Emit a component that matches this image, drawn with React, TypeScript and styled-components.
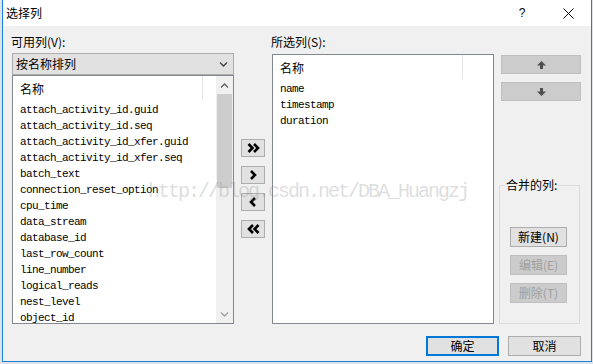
import React from 'react';
import styled, { createGlobalStyle } from 'styled-components';

const UI_FONT = `"Noto Sans CJK SC", "Liberation Sans", sans-serif`;
const LIST_FONT = `"Liberation Mono", "Noto Sans CJK SC", monospace`;

const GlobalStyle = createGlobalStyle`
  html, body {
    margin: 0;
    padding: 0;
    background: #dfe3e8;
  }
  body {
    font-family: ${UI_FONT};
    font-size: 12px;
    color: #000;
  }
`;

const Dialog = styled.div`
  position: relative;
  box-sizing: border-box;
  width: 590px;
  height: 362px;
  margin-left: 2px;
  border: 1px solid #1883d7;
  border-top: 0;
  background: #f0f0f0;
  display: flex;
  flex-direction: column;
  overflow: hidden;
`;

const TitleBar = styled.div`
  height: 26px;
  flex: none;
  background: #fff;
  display: flex;
  align-items: center;
  padding-left: 3px;
  font-size: 12px;
  line-height: 16px;
`;

const Title = styled.span`
  flex: 1;
`;

const TitleControl = styled.span`
  width: 46px;
  display: flex;
  justify-content: center;
  align-items: center;
  font-family: "Liberation Sans", sans-serif;
  font-size: 12px;
`;

const Body = styled.div`
  flex: 1;
  display: flex;
  flex-direction: column;
  padding: 8px 10px 5px 9px;
`;

const Main = styled.div`
  display: flex;
  gap: 7px;
  height: 290px;
`;

const Column = styled.div<{ $width: number }>`
  width: ${(p) => p.$width}px;
  display: flex;
  flex-direction: column;
`;

const Label = styled.div<{ $height: number }>`
  height: ${(p) => p.$height}px;
  line-height: 16px;
  font-size: 12px;
  margin-left: -1px;
`;

const Dropdown = styled.div`
  box-sizing: border-box;
  height: 22px;
  border: 1px solid #adadad;
  background: #e1e1e1;
  display: flex;
  align-items: center;
  justify-content: space-between;
  padding: 0 5px 0 3px;
  line-height: 16px;
`;

const ListBox = styled.div<{ $height: number }>`
  box-sizing: border-box;
  height: ${(p) => p.$height}px;
  border: 1px solid #828790;
  background: #fff;
  display: flex;
  overflow: hidden;
`;

const ListContent = styled.div`
  flex: 1;
  min-width: 0;
  overflow: hidden;
`;

const Header = styled.div`
  height: 24px;
  display: flex;
`;

const HeaderCell = styled.div`
  width: 190px;
  box-sizing: border-box;
  border-right: 1px solid #e5e5e5;
  padding: 2px 0 0 7px;
  line-height: 22px;
  font-size: 12px;
`;

const Items = styled.div`
  padding-top: 2px;
`;

const Item = styled.div`
  height: 16px;
  line-height: 16px;
  padding-left: 7px;
  font-family: ${LIST_FONT};
  font-size: 11px;
  letter-spacing: -0.6px;
  white-space: nowrap;
`;

const ScrollBar = styled.div`
  width: 17px;
  flex: none;
  background: #f0f0f0;
  display: flex;
  flex-direction: column;
`;

const ScrollArrow = styled.div`
  height: 18px;
  display: flex;
  align-items: center;
  justify-content: center;
`;

const ScrollTrack = styled.div`
  flex: 1;
  display: flex;
  flex-direction: column;
  padding: 0 1px;
`;

const Thumb = styled.div`
  height: 94px;
  background: #cdcdcd;
`;

const MoveColumn = styled.div`
  width: 24px;
  padding-top: 105px;
  display: flex;
  flex-direction: column;
  gap: 9px;
`;

const SmallButton = styled.div`
  box-sizing: border-box;
  width: 24px;
  height: 18px;
  border: 1px solid #adadad;
  background: #e1e1e1;
  display: flex;
  align-items: center;
  justify-content: center;
`;

const SideColumn = styled.div`
  width: 80px;
  padding-top: 21px;
  display: flex;
  flex-direction: column;
`;

const OrderButton = styled.div`
  box-sizing: border-box;
  height: 19px;
  border: 1px solid #bfbfbf;
  background: #cccccc;
  display: flex;
  align-items: center;
  justify-content: center;
  & + & {
    margin-top: 8px;
  }
`;

const Group = styled.fieldset`
  box-sizing: border-box;
  margin: 76px 0 0 -2px;
  width: 81px;
  flex: 1;
  border: 1px solid #dcdcdc;
  padding: 34px 0 0 10px;
  display: flex;
  flex-direction: column;
  gap: 8px;
`;

const GroupTitle = styled.legend`
  margin-left: -5px;
  padding: 0 1px;
  line-height: 16px;
  font-size: 12px;
`;

const GroupButton = styled.div<{ $disabled?: boolean }>`
  box-sizing: border-box;
  width: 57px;
  height: 20px;
  border: 1px solid ${(p) => (p.$disabled ? '#bfbfbf' : '#adadad')};
  background: ${(p) => (p.$disabled ? '#cccccc' : '#e1e1e1')};
  color: ${(p) => (p.$disabled ? '#a0a0a0' : '#000')};
  display: flex;
  align-items: center;
  justify-content: center;
  font-size: 12px;
  line-height: 16px;
`;

const Footer = styled.div`
  margin-top: 12px;
  display: flex;
  justify-content: flex-end;
  gap: 9px;
`;

const DialogButton = styled.div<{ $primary?: boolean }>`
  box-sizing: border-box;
  width: 73px;
  height: 20px;
  border: ${(p) => (p.$primary ? '2px solid #0078d7' : '1px solid #adadad')};
  background: #e1e1e1;
  display: flex;
  align-items: center;
  justify-content: center;
  font-size: 12px;
  line-height: 16px;
`;

const Watermark = styled.div`
  position: absolute;
  left: 145px;
  top: 182px;
  font-family: "Liberation Mono", monospace;
  font-size: 20px;
  line-height: 20px;
  letter-spacing: -2px;
  color: rgba(140, 140, 140, 0.3);
  white-space: nowrap;
  pointer-events: none;
`;

const available = [
  'attach_activity_id.guid',
  'attach_activity_id.seq',
  'attach_activity_id_xfer.guid',
  'attach_activity_id_xfer.seq',
  'batch_text',
  'connection_reset_option',
  'cpu_time',
  'data_stream',
  'database_id',
  'last_row_count',
  'line_number',
  'logical_reads',
  'nest_level',
  'object_id',
];

const selected = ['name', 'timestamp', 'duration'];

const Chevron = ({ dir, double }: { dir: 'left' | 'right'; double?: boolean }) => (
  <svg
    width={double ? 13 : 8}
    height={10}
    viewBox={double ? '0 0 13 10' : '0 0 8 10'}
    style={{ transform: dir === 'left' ? 'scaleX(-1)' : undefined }}
  >
    <path
      d={double ? 'M1.5 1 L5.5 5 L1.5 9 M7 1 L11 5 L7 9' : 'M2 1 L6 5 L2 9'}
      fill="none"
      stroke="#000"
      strokeWidth={2.6}
    />
  </svg>
);

const BlockArrow = ({ down }: { down?: boolean }) => (
  <svg width={9} height={8} viewBox="0 0 9 8" style={{ transform: down ? 'scaleY(-1)' : undefined }}>
    <path d="M4.5 0 L9 4.5 H6 V8 H3 V4.5 H0 Z" fill="#4f4f4f" />
  </svg>
);

const SmallCaret = ({ down, color = '#606060' }: { down?: boolean; color?: string }) => (
  <svg width={9} height={5} viewBox="0 0 9 5" style={{ transform: down ? 'scaleY(-1)' : undefined }}>
    <path d="M1 4.5 L4.5 1 L8 4.5" fill="none" stroke={color} strokeWidth={1.3} />
  </svg>
);

const ColumnList = ({ items, height, scroll }: { items: string[]; height: number; scroll?: boolean }) => (
  <ListBox $height={height}>
    <ListContent>
      <Header>
        <HeaderCell>名称</HeaderCell>
      </Header>
      <Items>
        {items.map((it) => (
          <Item key={it}>{it}</Item>
        ))}
      </Items>
    </ListContent>
    {scroll && (
      <ScrollBar>
        <ScrollArrow>
          <SmallCaret />
        </ScrollArrow>
        <ScrollTrack>
          <Thumb />
        </ScrollTrack>
        <ScrollArrow>
          <SmallCaret down color="#a0a0a0" />
        </ScrollArrow>
      </ScrollBar>
    )}
  </ListBox>
);

const App: React.FC = () => {
  return (
    <>
      <GlobalStyle />
      <Dialog>
        <TitleBar>
          <Title>选择列</Title>
          <TitleControl>?</TitleControl>
          <TitleControl>
            <svg width={11} height={11} viewBox="0 0 11 11">
              <path d="M0.5 0.5 L10.5 10.5 M10.5 0.5 L0.5 10.5" stroke="#000" strokeWidth={1} />
            </svg>
          </TitleControl>
        </TitleBar>
        <Body>
          <Main>
            <Column $width={222}>
              <Label $height={19}>可用列(V):</Label>
              <Dropdown>
                <span>按名称排列</span>
                <SmallCaret down color="#404040" />
              </Dropdown>
              <ColumnList items={available} height={249} scroll />
            </Column>
            <MoveColumn>
              <SmallButton>
                <Chevron dir="right" double />
              </SmallButton>
              <SmallButton>
                <Chevron dir="right" />
              </SmallButton>
              <SmallButton>
                <Chevron dir="left" />
              </SmallButton>
              <SmallButton>
                <Chevron dir="left" double />
              </SmallButton>
            </MoveColumn>
            <Column $width={222}>
              <Label $height={20}>所选列(S):</Label>
              <ColumnList items={selected} height={270} />
            </Column>
            <SideColumn>
              <OrderButton>
                <BlockArrow />
              </OrderButton>
              <OrderButton>
                <BlockArrow down />
              </OrderButton>
              <Group>
                <GroupTitle>合并的列:</GroupTitle>
                <GroupButton>新建(N)</GroupButton>
                <GroupButton $disabled>编辑(E)</GroupButton>
                <GroupButton $disabled>删除(T)</GroupButton>
              </Group>
            </SideColumn>
          </Main>
          <Footer>
            <DialogButton $primary>确定</DialogButton>
            <DialogButton>取消</DialogButton>
          </Footer>
        </Body>
        <Watermark>http://blog.csdn.net/DBA_Huangzj</Watermark>
      </Dialog>
    </>
  );
};

export default App;
